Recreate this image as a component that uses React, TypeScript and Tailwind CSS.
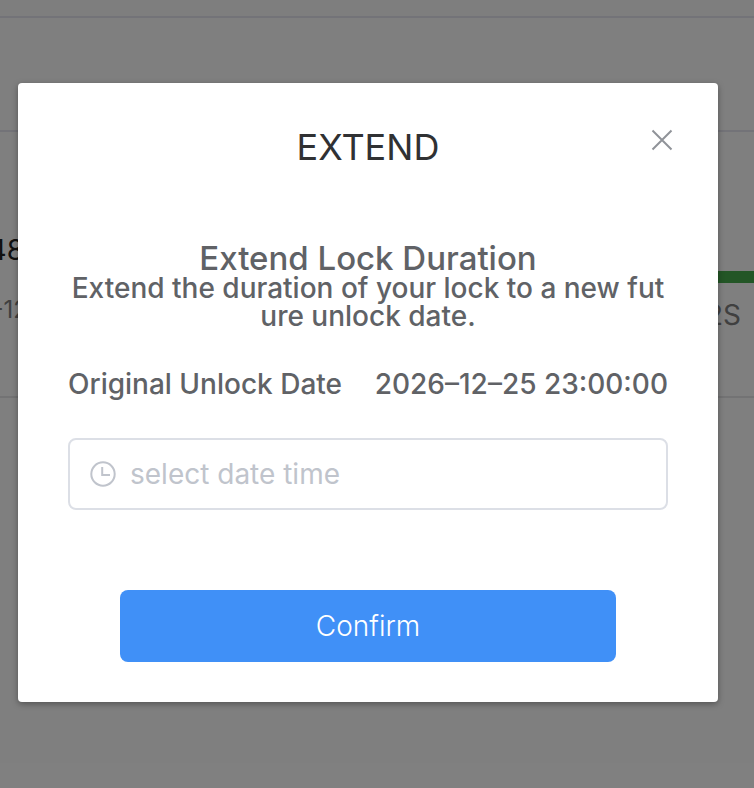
import React from "react";

function LockRow() {
  return (
    <div className="flex h-[266px] items-start justify-between border-b-2 border-[#e6e6e8] text-[28px] leading-8 text-[#808080]">
      <div className="flex w-7 flex-col items-end whitespace-nowrap pt-[102px]">
        <span className="pr-1 text-[#202020]">48</span>
        <span className="pt-7 text-2xl leading-8">-12</span>
      </div>
      <div className="flex w-12 flex-col pt-[139px]">
        <div className="h-3 bg-[#46ac4c]" />
        <span className="self-start pt-4">2S</span>
      </div>
    </div>
  );
}

function ExtendDialog() {
  return (
    <section
      role="dialog"
      aria-modal="true"
      aria-labelledby="dialog-title"
      className="w-full rounded-sm bg-white px-[50px] pb-10 shadow-[0_2px_6px_rgba(0,0,0,0.35)]"
    >
      <header className="grid grid-cols-[12px_1fr_12px] items-center pt-10">
        <h1 id="dialog-title" className="col-start-2 text-center text-4xl leading-12 text-[#303133]">
          EXTEND
        </h1>
        <button type="button" aria-label="Close" className="mb-[14px] flex justify-center text-[#909399]">
          <svg viewBox="0 0 24 24" className="size-6 shrink-0" fill="none" stroke="currentColor" strokeWidth="2">
            <path d="M2.5 2.5 21.5 21.5M21.5 2.5 2.5 21.5" />
          </svg>
        </button>
      </header>

      <div className="pt-[71px] text-center text-[28px] leading-7 font-medium break-all text-[#606266]">
        <h2 className="text-[33px] leading-8">Extend Lock Duration</h2>
        <p>Extend the duration of your lock to a new future unlock date.</p>
      </div>

      <div className="flex justify-between pt-10 text-[28px] leading-7 font-medium whitespace-nowrap text-[#606266]">
        <span>Original Unlock Date</span>
        <time dateTime="2026-12-25T23:00:00">2026–12–25 23:00:00</time>
      </div>

      <label className="mt-10 flex h-18 items-center gap-[14px] rounded-lg border-2 border-[#dcdfe6] px-5 text-[#c0c4cc]">
        <svg viewBox="0 0 26 26" className="size-[26px] shrink-0" fill="none" stroke="currentColor" strokeWidth="2">
          <circle cx="13" cy="13" r="11.7" />
          <path d="M12.2 6v8H20" />
        </svg>
        <input
          type="text"
          aria-label="select date time"
          placeholder="select date time"
          className="min-w-0 flex-1 bg-transparent text-[28px] leading-8 text-[#606266] outline-none placeholder:text-[#c0c4cc]"
        />
      </label>

      <div className="px-[52px] pt-20">
        <button type="button" className="h-18 w-full rounded-lg bg-[#4090f7] text-[28px] leading-8 font-light text-white">
          Confirm
        </button>
      </div>
    </section>
  );
}

export default function App() {
  return (
    <div className="relative min-h-screen overflow-hidden bg-white font-['Inter','Liberation_Sans',sans-serif]">
      <div className="h-[18px] border-b-2 border-[#e7e6f0] bg-[#fdfdfd]" />
      <div className="h-[114px] border-b-2 border-[#e7e6f0]" />
      <LockRow />
      <div className="absolute inset-0 flex items-start bg-black/50 pt-[83px] pr-9 pb-9 pl-[18px]">
        <ExtendDialog />
      </div>
    </div>
  );
}
